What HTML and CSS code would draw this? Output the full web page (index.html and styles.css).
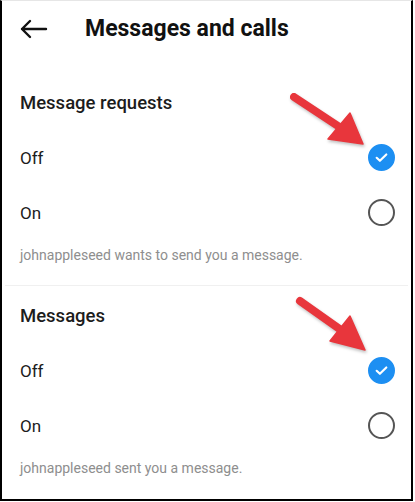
FILE: index.html
```html
<!DOCTYPE html>
<html lang="en">
<head>
  <meta charset="UTF-8" />
  <meta name="viewport" content="width=device-width, initial-scale=1.0"/>
  <title>Messages and calls</title>
  <link rel="stylesheet" href="styles.css">
</head>
<body>
  <div class="frame">
    <div class="topbar">
      <svg class="back" width="28" height="20" viewBox="0 0 28 20">
        <path d="M26 10H2M10 2L2 10l8 8" fill="none" stroke="#111" stroke-width="2.4" stroke-linecap="round" stroke-linejoin="round"/>
      </svg>
      <h1>Messages and calls</h1>
    </div>

    <section class="group first">
      <h3>Message requests</h3>
      <div class="option">
        <span>Off</span>
        <span class="radio checked">
          <svg width="15" height="15" viewBox="0 0 14 14"><path d="M2.5 7.3l3 2.8 6-6" fill="none" stroke="#fff" stroke-width="2" stroke-linecap="round" stroke-linejoin="round"/></svg>
        </span>
      </div>
      <div class="option">
        <span>On</span>
        <span class="radio"></span>
      </div>
      <p class="note">johnappleseed wants to send you a message.</p>
    </section>

    <section class="group">
      <h3>Messages</h3>
      <div class="option">
        <span>Off</span>
        <span class="radio checked">
          <svg width="15" height="15" viewBox="0 0 14 14"><path d="M2.5 7.3l3 2.8 6-6" fill="none" stroke="#fff" stroke-width="2" stroke-linecap="round" stroke-linejoin="round"/></svg>
        </span>
      </div>
      <div class="option">
        <span>On</span>
        <span class="radio"></span>
      </div>
      <p class="note">johnappleseed sent you a message.</p>
    </section>

    <svg class="arrows" width="413" height="501" viewBox="0 0 413 501">
      <g fill="#e8363c" stroke="#e8363c">
        <line x1="294" y1="97" x2="341" y2="128" stroke-width="8" stroke-linecap="round"/>
        <polygon points="328,139 350,113 363,144" stroke-width="1.5" stroke-linejoin="round"/>
        <line x1="300" y1="301" x2="341" y2="330" stroke-width="8" stroke-linecap="round"/>
        <polygon points="330,341 350,316 365,350" stroke-width="1.5" stroke-linejoin="round"/>
      </g>
    </svg>
  </div>
</body>
</html>
```

FILE: styles.css
```css
body { margin: 0; background: #fff; font-family: Roboto, "Liberation Sans", sans-serif; color: #1c1c1c; }
.frame {
  position: relative;
  width: 409px;
  height: 498px;
  border: 2px solid #000;
  border-top: 1px solid #e6e6e6;
  overflow: hidden;
}
.topbar {
  display: flex;
  align-items: center;
  height: 54px;
  padding-left: 18px;
  margin-bottom: 20px;
}
.back { margin-top: 2px; }
h1 {
  margin: 0 0 0 37px;
  font-size: 23px;
  font-weight: 700;
  color: #111;
}
.group h3 {
  margin: 0;
  height: 55px;
  display: flex;
  align-items: center;
  padding-left: 18px;
  font-size: 18.5px;
  font-weight: 500;
  color: #1c1c1c;
}
.group.first { border-bottom: 1px solid #f0f0f0; padding-bottom: 21px; margin: 0 3px; }
.group.first h3, .group.first .option, .group.first .note { margin-left: -3px; margin-right: -3px; }
.group + .group { padding-top: 2px; }
.option {
  display: flex;
  align-items: center;
  justify-content: space-between;
  height: 55px;
  padding: 0 16px 0 18px;
  font-size: 17px;
}
.radio {
  width: 23px;
  height: 23px;
  border: 2px solid #555;
  border-radius: 50%;
  display: flex;
  align-items: center;
  justify-content: center;
}
.radio.checked { background: #1d8ff2; border-color: #1d8ff2; }
.note {
  margin: 6px 0 0;
  padding-left: 18px;
  line-height: 18px;
  font-size: 14px;
  color: #8e8e8e;
}
.arrows {
  position: absolute;
  left: -2px;
  top: -1px;
  pointer-events: none;
  filter: drop-shadow(1px 2px 1.5px rgba(0, 0, 0, 0.25));
}
```
